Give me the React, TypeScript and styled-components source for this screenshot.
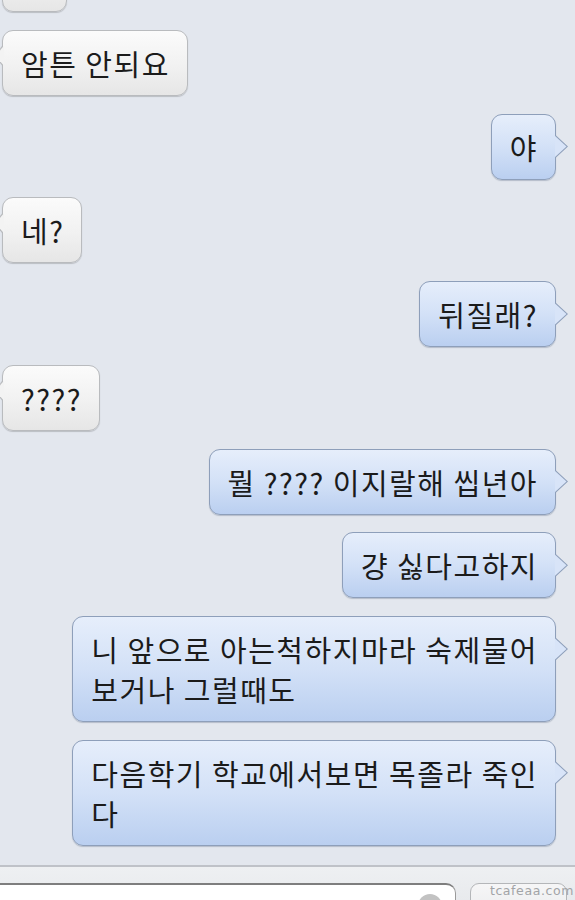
import React from "react";
import styled, { createGlobalStyle, css } from "styled-components";

const GlobalStyle = createGlobalStyle`
  html, body {
    margin: 0;
    padding: 0;
    background: #e3e7ee;
    overflow: hidden;
  }
  * { box-sizing: border-box; }
`;

type Side = "left" | "right";

interface Message {
  side: Side;
  text: string;
}

// Line breaks inside the long messages are kept as typed.
const messages: Message[] = [
  { side: "left", text: "응" },
  { side: "left", text: "암튼 안되요" },
  { side: "right", text: "야" },
  { side: "left", text: "네?" },
  { side: "right", text: "뒤질래?" },
  { side: "left", text: "????" },
  { side: "right", text: "뭘 ???? 이지랄해 씹년아" },
  { side: "right", text: "걍 싫다고하지" },
  { side: "right", text: "니 앞으로 아는척하지마라 숙제물어\n보거나 그럴때도" },
  { side: "right", text: "다음학기 학교에서보면 목졸라 죽인\n다" },
];

const Screen = styled.div`
  height: 900px;
  display: flex;
  flex-direction: column;
  overflow: hidden;
  font-family: "Noto Sans CJK KR", "Noto Sans", sans-serif;
`;

const Thread = styled.div`
  flex: 1;
  display: flex;
  flex-direction: column;
  gap: 17.75px;
  margin-top: -54px;
  padding: 0 19px 0 2px;
`;

const leftBubble = css`
  align-self: flex-start;
  background: linear-gradient(#fbfbfb, #f1f1f1 55%, #e6e6e6);
  border: 1px solid #b9bbbe;
  box-shadow: 0 1px 1px rgba(0, 0, 0, 0.18);

  &::before {
    content: "";
    position: absolute;
    left: -9px;
    top: 14px;
    width: 9px;
    height: 22px;
    background: #b9bbbe;
    clip-path: polygon(100% 0, 0 50%, 100% 100%);
  }
  &::after {
    content: "";
    position: absolute;
    left: -8px;
    top: 15px;
    width: 9px;
    height: 20px;
    background: #f3f3f3;
    clip-path: polygon(100% 0, 0 50%, 100% 100%);
  }
`;

const rightBubble = css`
  align-self: flex-end;
  background: linear-gradient(#e6eefb, #d3e1f7 50%, #bacff0);
  border: 1px solid #8e9fba;
  box-shadow: 0 1px 1px rgba(40, 60, 90, 0.25);

  &::before {
    content: "";
    position: absolute;
    right: -13px;
    top: 19px;
    width: 13px;
    height: 26px;
    background: #8e9fba;
    clip-path: polygon(0 0, 4% 6%, 100% 50%, 4% 94%, 0 100%);
  }
  &::after {
    content: "";
    position: absolute;
    right: -11.5px;
    top: 21px;
    width: 12px;
    height: 22px;
    background: #d8e4f8;
    clip-path: polygon(0 0, 100% 50%, 0 100%);
  }
`;

const Bubble = styled.div<{ $side: Side }>`
  position: relative;
  padding: 12px 17px 12px 18px;
  border-radius: 11px;
  font-size: 29px;
  letter-spacing: 1.5px;
  line-height: 40px;
  white-space: pre-line;
  color: #1b1b1b;
  ${(p) => (p.$side === "left" ? leftBubble : rightBubble)}
`;

const InputBar = styled.div`
  height: 35px;
  flex-shrink: 0;
  display: flex;
  align-items: flex-start;
  padding-top: 16px;
  background: linear-gradient(#eef0f2, #e8eaed);
  border-top: 2px solid #bfc2c8;
  position: relative;
`;

const Field = styled.div`
  width: 466px;
  height: 40px;
  margin-left: -10px;
  display: flex;
  justify-content: flex-end;
  padding: 9px 13px 0 0;
  background: #ffffff;
  border: 1px solid #9a9a9a;
  border-top: 2px solid #7e7e7e;
  border-radius: 10px;
`;

const ClearDot = styled.div`
  width: 24px;
  height: 24px;
  border-radius: 50%;
  background: #c2c2c2;
`;

const SendButton = styled.div`
  width: 97px;
  height: 40px;
  margin-left: 14px;
  border: 1px solid #b4b6b9;
  border-radius: 9px;
  background: linear-gradient(#f6f6f7, #e9eaec);
`;

const Watermark = styled.span`
  position: absolute;
  right: 1px;
  top: 17px;
  font-family: "DejaVu Sans", sans-serif;
  font-size: 12.5px;
  letter-spacing: 0.6px;
  line-height: 14px;
  color: #a2a4a7;
`;

export default function App() {
  return (
    <>
      <GlobalStyle />
      <Screen>
        <Thread>
          {messages.map((m, i) => (
            <Bubble key={i} $side={m.side}>
              {m.text}
            </Bubble>
          ))}
        </Thread>
        <InputBar>
          <Field>
            <ClearDot />
          </Field>
          <SendButton />
          <Watermark>tcafeaa.com</Watermark>
        </InputBar>
      </Screen>
    </>
  );
}
